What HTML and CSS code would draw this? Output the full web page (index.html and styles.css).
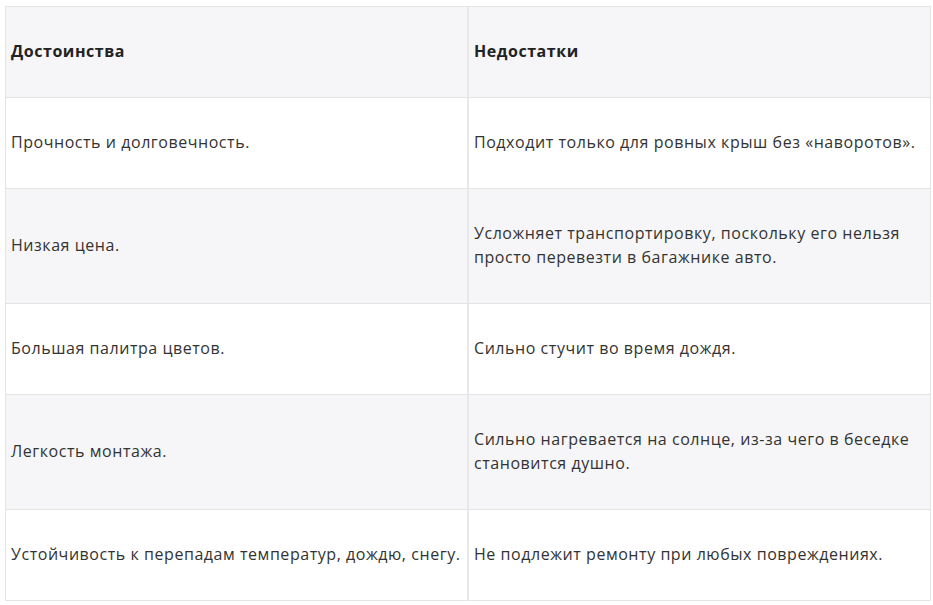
FILE: index.html
```html
<!DOCTYPE html>
<html lang="ru">
<head>
<meta charset="utf-8">
<link rel="stylesheet" href="styles.css">
</head>
<body>
<table class="cmp">
  <thead>
    <tr><th>Достоинства</th><th>Недостатки</th></tr>
  </thead>
  <tbody>
    <tr><td>Прочность и долговечность.</td><td>Подходит только для ровных крыш без «наворотов».</td></tr>
    <tr class="alt"><td>Низкая цена.</td><td>Усложняет транспортировку, поскольку его нельзя просто перевезти в багажнике авто.</td></tr>
    <tr><td>Большая палитра цветов.</td><td>Сильно стучит во время дождя.</td></tr>
    <tr class="alt"><td>Легкость монтажа.</td><td>Сильно нагревается на солнце, из-за чего в беседке становится душно.</td></tr>
    <tr><td>Устойчивость к перепадам температур, дождю, снегу.</td><td>Не подлежит ремонту при любых повреждениях.</td></tr>
  </tbody>
</table>
</body>
</html>
```

FILE: styles.css
```css
html, body {
  margin: 0;
  padding: 0;
  background: #fff;
}
body {
  padding: 6px 0 0 5px;
  font-family: "Open Sans", "DejaVu Sans", sans-serif;
  font-size: 16px;
  letter-spacing: 0.55px;
  line-height: 24px;
  color: #333;
}
.cmp {
  border-collapse: collapse;
  width: 926px;
  table-layout: fixed;
}
.cmp th, .cmp td {
  border: 1px solid #e4e4e4;
  padding: 32px 5px 34px;
  text-align: left;
  vertical-align: middle;
}
.cmp th + th, .cmp td + td {
  border-left: 2px solid #e8e8e8;
}
.cmp th {
  font-weight: 700;
  color: #222;
  background: #f6f6f8;
}
.cmp tr.alt td {
  background: #f6f6f8;
}
```
